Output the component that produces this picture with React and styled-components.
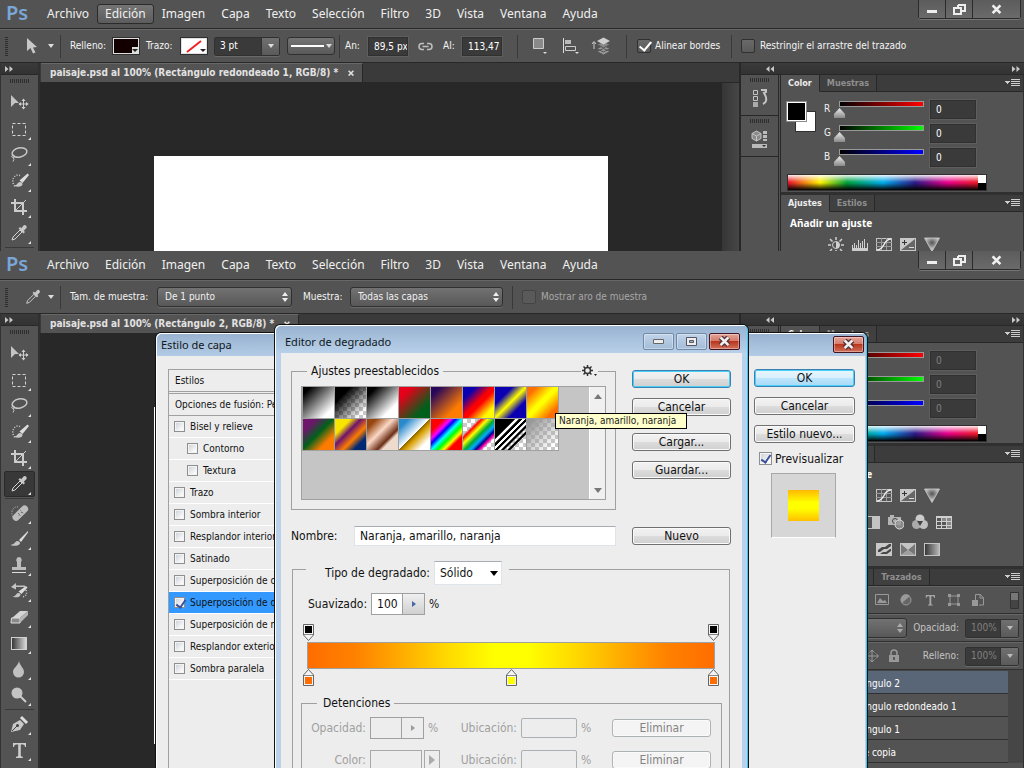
import React, { useState } from 'react';
import styled, { createGlobalStyle, css } from 'styled-components';

const GlobalStyle = createGlobalStyle`
  * {
    box-sizing: border-box;
  }

  body {
    margin: 0;
    background: #282828;
    color: #f0f0f0;
    font-family: 'DejaVu Sans Condensed', 'DejaVu Sans', sans-serif;
    font-size: 10px;
    line-height: 14px;
  }

  button, input, select {
    margin: 0;
    padding: 0;
    border: 0;
    border-radius: 0;
    background: none;
    color: inherit;
    font: inherit;
  }

  svg {
    display: block;
    flex: none;
  }
`;

const Screen = styled.div`
  height: 100vh;
  min-width: 1024px;
  display: flex;
  flex-direction: column;
  overflow: hidden;
`;

const AppWindow = styled.section`
  position: relative;
  display: flex;
  flex-direction: column;
  overflow: hidden;
  flex: ${props => (props.$grow ? '1 1 0' : '0 0 251px')};
  min-height: 0;
`;

/* menu bar */

const MenuBar = styled.header`
  height: 29px;
  flex: none;
  display: flex;
  align-items: flex-start;
  background: #535353;
  border-bottom: 1px solid #282828;
  font-family: 'Noto Sans', sans-serif;
  font-size: 12px;
`;

const Logo = styled.span`
  width: 39px;
  padding-left: 6px;
  flex: none;
  color: #7aa6d8;
  font-weight: 600;
  font-size: 20px;
  line-height: 26px;
`;

const Menu = styled.nav`
  display: flex;
  padding-top: 4px;
`;

const MenuItem = styled.button`
  height: 20px;
  padding: 0 7px;
  border: 1px solid ${props => (props.$open ? '#2b2b2b' : 'transparent')};
  border-radius: 3px;
  background: ${props => (props.$open ? 'linear-gradient(#747474, #5c5c5c)' : 'none')};
  line-height: 18px;
`;

const WindowButtons = styled.div`
  display: flex;
  margin: 0 3px 0 auto;
  border: 1px solid #2b2b2b;
  border-top: 0;
  border-radius: 0 0 3px 3px;
  box-shadow: 0 1px 0 #757575;
`;

const WindowButton = styled.button`
  width: ${props => (props.$wide ? '47px' : '27px')};
  height: 18px;
  display: flex;
  align-items: center;
  justify-content: center;
  background: linear-gradient(#5c5c5c, #6a6a6a);
  border-right: 1px solid #2b2b2b;

  &:last-child {
    border-right: 0;
  }
`;

/* options bar */

const OptionsBar = styled.div`
  height: 34px;
  flex: none;
  display: flex;
  align-items: center;
  padding-left: 5px;
  background: #535353;
  border-top: 1px solid #686868;
  border-bottom: 1px solid #282828;
  white-space: nowrap;
`;

const BarGrip = styled.div`
  width: 3px;
  height: 19px;
  margin-right: 16px;
  background: repeating-linear-gradient(#2e2e2e 0 1px, transparent 1px 2px);
`;

const ToolPreview = styled.div`
  width: 30px;
  display: flex;
  align-items: center;
  justify-content: space-between;
`;

const Divider = styled.div`
  width: 1px;
  height: 23px;
  margin: 0 ${props => props.$after ?? 9}px 0 ${props => props.$before ?? 6}px;
  background: #393939;
`;

const OptionLabel = styled.label`
  flex: none;
  width: ${props => props.$width}px;
  color: ${props => (props.$dim ? '#a8a8a8' : '#f4f4f4')};
`;

const ColorButton = styled.button`
  position: relative;
  width: 28px;
  height: 18px;
  margin-right: 6px;
  border: 1px solid #303030;
  background: ${props => props.$color};
  box-shadow: inset 0 0 0 1px #e0e0e0;
  overflow: hidden;

  svg {
    position: absolute;
    inset: 0;
  }
`;

const FieldGroup = styled.div`
  display: flex;
  height: ${props => props.$height || 19}px;
  border: 1px solid #303030;
  border-radius: 2px;
  box-shadow: 0 1px 0 #6a6a6a;
`;

const DarkInput = styled.input`
  width: ${props => props.$width}px;
  height: ${props => (props.$boxed ? '19px' : 'auto')};
  padding-left: 5px;
  background: #3a3a3a;
  color: ${props => (props.$dim ? '#808080' : '#fff')};
  ${props => props.$boxed && css`
    border: 1px solid #303030;
    box-shadow: 0 0 0 1px #5e5e5e;
  `}
`;

const DropButton = styled.button`
  width: 18px;
  display: flex;
  align-items: center;
  justify-content: center;
  background: linear-gradient(#707070, #5a5a5a);
  border-left: 1px solid #303030;
`;

const StrokeButton = styled.button`
  width: 48px;
  height: 18px;
  margin-left: 7px;
  display: flex;
  align-items: center;
  justify-content: center;
  gap: 2px;
  border: 1px solid #303030;
  border-radius: 3px;
  background: linear-gradient(#747474, #5a5a5a);
`;

const StrokeLine = styled.span`
  width: 33px;
  height: 2px;
  background: #fff;
`;

const LinkSlot = styled.div`
  width: 35px;
  display: flex;
  justify-content: center;
`;

const SelectWrap = styled.div`
  position: relative;
  width: ${props => props.$width}px;
  margin-right: ${props => props.$after || 0}px;

  svg {
    position: absolute;
    right: 4px;
    top: 50%;
    margin-top: -5px;
    pointer-events: none;
  }
`;

const DarkSelect = styled.select`
  appearance: none;
  width: 100%;
  height: 20px;
  padding: 0 14px 0 7px;
  border: 1px solid #303030;
  border-radius: 3px;
  background: linear-gradient(#727272, #585858);
  box-shadow: 0 1px 0 #6a6a6a;
`;

const DarkCheck = styled.input`
  appearance: none;
  position: relative;
  width: 14px;
  height: 14px;
  margin-right: ${props => props.$after || 5}px;
  border: 1px solid #303030;
  border-radius: 2px;
  background: linear-gradient(#6a6a6a, #5a5a5a);

  &:disabled {
    background: #5a5a5a;
    border-color: #444;
  }

  &:checked::after {
    content: '';
    position: absolute;
    left: 4px;
    top: -1px;
    width: 5px;
    height: 10px;
    border: solid #fff;
    border-width: 0 2px 2px 0;
    transform: rotate(40deg);
  }
`;

const IconButton = styled.button`
  width: 29px;
  display: flex;
  align-items: center;
`;

/* work area */

const WorkArea = styled.div`
  flex: 1;
  min-height: 0;
  display: flex;
`;

const ToolColumn = styled.aside`
  width: 40px;
  flex: none;
  display: flex;
  flex-direction: column;
  background: #535353;
  border-left: 1px solid #333;
  border-right: 2px solid #303030;
  overflow: hidden;
`;

const DockHeader = styled.div`
  height: 12px;
  flex: none;
  display: flex;
  align-items: center;
  justify-content: space-between;
  padding: 0 4px;
  background: linear-gradient(#3a3a3a, #333);
  border-bottom: 1px solid #282828;
`;

const Spacer = styled.span`
  width: 21px;
  flex: ${props => (props.$grow ? 1 : 'none')};
`;

const Grip = styled.div`
  width: 19px;
  height: 4px;
  margin: ${props => props.$top || 4}px auto 0;
  flex: none;
  background: repeating-linear-gradient(90deg, #2e2e2e 0 1px, transparent 1px 2px);
`;

const ToolList = styled.div`
  padding: 7px 3px 0;
  display: flex;
  flex-direction: column;
`;

const Tool = styled.button`
  position: relative;
  height: 26px;
  flex: none;
  display: flex;
  align-items: center;
  justify-content: center;
  padding-right: 2px;
  border: 1px solid ${props => (props.$active ? '#2a2a2a' : 'transparent')};
  border-radius: 2px;
  background: ${props => (props.$active ? '#383838' : 'none')};

  ${props => props.$more && css`
    &::after {
      content: '';
      position: absolute;
      right: 3px;
      bottom: 1px;
      border-left: 3px solid transparent;
      border-bottom: 3px solid #e0e0e0;
    }
  `}
`;

const ToolRule = styled.div`
  height: 1px;
  flex: none;
  margin: 1px 1px;
  background: #393939;
`;

const Document = styled.main`
  flex: 1;
  min-width: 0;
  display: flex;
  flex-direction: column;
  background: #282828;
`;

const TabBar = styled.div`
  height: 20px;
  flex: none;
  display: flex;
  background: #3a3a3a;
  border-bottom: 1px solid #282828;
`;

const DocumentTab = styled.div`
  display: flex;
  align-items: center;
  gap: 9px;
  padding: 0 7px 0 9px;
  margin-left: 1px;
  background: #535353;
  border-top: 1px solid #686868;
  border-right: 1px solid #282828;
  color: #e2e2e2;
  font-weight: 700;
  white-space: nowrap;
`;

const CanvasArea = styled.div`
  flex: 1;
  min-height: 0;
  display: flex;
  justify-content: space-between;
`;

const Artboard = styled.div`
  width: ${props => props.$width}px;
  margin: 73px 0 0 114px;
  background: #fff;
  ${props => props.$inset && css`
    margin-bottom: 24px;
  `}
`;

const ScrollTrack = styled.div`
  width: 17px;
  background: linear-gradient(90deg, #363636, #464646);
`;

const Dock = styled.aside`
  width: 285px;
  flex: none;
  display: flex;
  flex-direction: column;
  border-left: 2px solid #282828;
  background: #535353;
`;

const DockBody = styled.div`
  flex: 1;
  min-height: 0;
  display: flex;
`;

const IconColumn = styled.div`
  width: 38px;
  flex: none;
  border-right: 1px solid #282828;
`;

const IconPanel = styled.div`
  height: 41px;
  display: flex;
  flex-direction: column;
  align-items: center;
  border-bottom: 1px solid #282828;

  svg {
    margin-top: 7px;
  }
`;

const Panels = styled.div`
  flex: 1;
  min-width: 0;
  border-left: 1px solid #282828;
  border-right: 1px solid #303030;
  margin-left: 1px;
`;

const Panel = styled.section`
  border-bottom: 3px solid #303030;
`;

const PanelTabs = styled.div`
  height: 17px;
  display: flex;
  align-items: stretch;
  background: #3c3c3c;
`;

const PanelTab = styled.button`
  padding: 0 7px;
  border-right: 1px solid #282828;
  border-bottom: 1px solid ${props => (props.$active ? 'transparent' : '#282828')};
  background: ${props => (props.$active ? '#535353' : '#404040')};
  color: ${props => (props.$active ? '#ededed' : '#8f8f8f')};
  font-size: 9px;
  font-weight: 700;
`;

const PanelMenu = styled.button`
  flex: 1;
  display: flex;
  justify-content: flex-end;
  align-items: center;
  padding-right: 3px;
  border-bottom: 1px solid #282828;
`;

const ColorBody = styled.div`
  height: 100px;
  padding: 8px 0 0 6px;
  display: grid;
  grid-template-columns: 37px auto;
  grid-template-rows: 74px 17px;
`;

const Swatches = styled.div`
  position: relative;
`;

const Swatch = styled.button`
  position: absolute;
  left: ${props => (props.$back ? 9 : 0)}px;
  top: ${props => (props.$back ? 12 : 2)}px;
  width: 19px;
  height: 19px;
  border: 1px solid #fff;
  background: ${props => props.$color};
  box-shadow: 0 0 0 1px ${props => (props.$back ? '#303030' : '#8a8a8a')};
`;

const Channel = styled.div`
  height: 24px;
  display: grid;
  grid-template-columns: 10px 96px 46px;
  align-items: start;
`;

const ChannelName = styled.span`
  padding-top: 2px;
`;

const ChannelSlider = styled.input`
  appearance: none;
  width: 95px;
  height: 18px;
  background:
    linear-gradient(90deg, #000, ${props => props.$color}) 6px 2px / 83px 4px no-repeat,
    linear-gradient(#999, #999) 5px 1px / 85px 6px no-repeat;

  &::-webkit-slider-thumb {
    appearance: none;
    width: 11px;
    height: 10px;
    margin-top: 8px;
    background: linear-gradient(#eee, #888);
    clip-path: polygon(50% 0, 100% 60%, 100% 100%, 0 100%, 0 60%);
  }
`;

const Spectrum = styled.div`
  grid-column: 1 / -1;
  width: 200px;
  height: 17px;
  border: 1px solid #303030;
  display: grid;
  grid-template-columns: 1fr 8px;
  grid-template-rows: 1fr 1fr;
`;

const SpectrumHue = styled.div`
  grid-row: 1 / 3;
  background:
    linear-gradient(rgba(255, 255, 255, 0.9), rgba(255, 255, 255, 0) 48%, rgba(0, 0, 0, 0) 52%, #000),
    linear-gradient(90deg, #e8112d, #fff200 17%, #00a13a 31%, #00adef 50%, #2e1a87 67%, #ec008c 84%, #ed1c24);
`;

const SpectrumEnd = styled.div`
  background: ${props => props.$color};
`;

const AdjustBody = styled.div`
  height: 103px;
  padding: 4px 0 0 9px;
`;

const AdjustTitle = styled.h2`
  margin: 0 0 6px;
  color: #fff;
  font-family: 'Noto Sans', sans-serif;
  font-size: 10px;
  line-height: 14px;
  font-weight: 700;
`;

const AdjustRow = styled.div`
  height: 27px;
  display: flex;
  gap: 8px;
  padding-left: ${props => (props.$wide ? 26 : 38)}px;
`;

const LayerTools = styled.div`
  height: 28px;
  display: flex;
  align-items: center;
  justify-content: flex-end;
  gap: ${props => props.$gap || 6}px;
  padding-right: 4px;
  border-top: 1px solid #666;
  border-bottom: 1px solid #303030;
  color: #c4c4c4;
`;

const LayerRow = styled.div`
  height: 23px;
  margin-right: 15px;
  padding-left: 60px;
  background: ${props => (props.$active ? '#596678' : '#535353')};
  border-bottom: 1px solid #303030;
  color: #fff;
  line-height: 26px;
`;

const LayerList = styled.div`
  padding-top: 1px;
  background: #464646;
`;

/* dialogs */

const Dialog = styled.div`
  position: absolute;
  left: ${props => props.$left}px;
  top: ${props => props.$top}px;
  bottom: 0;
  width: ${props => props.$width}px;
  display: flex;
  flex-direction: column;
  overflow: hidden;
  border: 1px solid #111;
  border-bottom: 0;
  border-radius: 6px 6px 0 0;
  background: linear-gradient(#98b2d0, #b9d1ea 29px);
  box-shadow: inset 1px 1px 0 #fff, inset -1px 0 0 #38c8f0;
  color: #111;
  font-size: 12px;
`;

const TitleBar = styled.div`
  height: ${props => props.$height}px;
  flex: none;
  display: flex;
  align-items: center;
  padding: ${props => props.$drop}px ${props => props.$side}px 0 ${props => props.$start}px;
  gap: 2px;
  font-family: 'Noto Sans', sans-serif;
  font-size: 11px;
  color: #101820;
`;

const TitleText = styled.span`
  margin-right: auto;
`;

const CaptionButton = styled.button`
  width: 31px;
  height: 17px;
  display: flex;
  align-items: center;
  justify-content: center;
  border: 1px solid ${props => (props.$close ? '#431422' : '#7189a4')};
  border-radius: 2px;
  background: ${props => (props.$close
    ? 'linear-gradient(#e3a598, #d4796a 48%, #b8361d 50%, #d2705a)'
    : 'linear-gradient(#c0d3e9, #a4bdd8)')};
  box-shadow: inset 0 0 0 1px rgba(255, 255, 255, 0.35);
`;

const EditorBody = styled.div`
  flex: 1;
  min-height: 0;
  margin: 0 6px;
  padding: 10px 11px 0 10px;
  background: #ededed;
  overflow: hidden;
`;

const EditorTop = styled.div`
  display: flex;
  justify-content: space-between;
`;

const PresetColumn = styled.div`
  width: 325px;
`;

const ButtonColumn = styled.div`
  width: 99px;
  display: flex;
  flex-direction: column;
  gap: 10px;
  padding-top: 7px;
`;

const PushButton = styled.button`
  height: 18px;
  width: 100%;
  border: 1px solid ${props => (props.$primary ? '#3c7fb1' : '#707070')};
  border-radius: 3px;
  background: ${props => (props.$glow
    ? 'linear-gradient(#e8f6fd, #d9f0fc 48%, #bee6fd 50%, #a7d9f5)'
    : 'linear-gradient(#f2f2f2, #ebebeb 48%, #dddddd 50%, #cfcfcf)')};
  box-shadow: inset 0 0 0 1px ${props => (props.$primary ? '#48d0f8' : '#fafafa')};
  line-height: 16px;

  &:disabled {
    border-color: #adb2b5;
    background: #f4f4f4;
    color: #838383;
  }
`;

const ButtonGap = styled.div`
  height: ${props => props.$size}px;
  margin-bottom: -10px;
`;

const GroupBox = styled.fieldset`
  position: relative;
  min-width: 0;
  margin: ${props => props.$margin || '0'};
  padding: ${props => props.$padding};
  border: 1px solid #a0a0a0;
`;

const Legend = styled.legend`
  display: flex;
  align-items: center;
  gap: 4px;
  margin-left: ${props => props.$offset || 0}px;
  padding: ${props => props.$padding || '0 4px'};
  line-height: 16px;
`;

const GearButton = styled.button`
  position: absolute;
  right: 17px;
  top: -14px;
  padding: 0 1px;
  display: flex;
  align-items: flex-end;
  gap: 1px;
  background: #ededed;
`;

const PresetBox = styled.div`
  height: 114px;
  display: flex;
  justify-content: space-between;
  border: 1px solid #a0a0a0;
  background: #c5c5c5;
`;

const PresetGrid = styled.div`
  display: grid;
  grid-template-columns: repeat(8, 31px);
  grid-auto-rows: 31px;
  gap: 1px;
  align-self: flex-start;
  padding: 0 1px 1px;
  background: #a0a0a0;
`;

const checker = 'repeating-conic-gradient(#c8c8c8 0 25%, #fff 0 50%) 0 0 / 8px 8px';

const Preset = styled.button`
  background: linear-gradient(135deg, ${props => props.$stops}), ${checker};
`;

const PresetScroll = styled.div`
  width: 16px;
  display: flex;
  flex-direction: column;
  justify-content: space-between;
  align-items: center;
  padding: 7px 0 6px;
  background: #f0f0f0;
  border-left: 1px solid #fff;
`;

const Tooltip = styled.div`
  position: absolute;
  left: 555px;
  top: 162px;
  height: 16px;
  width: 132px;
  padding-left: 3px;
  border: 1px solid #000;
  background: #ffffcc;
  color: #222;
`;

const NameRow = styled.div`
  display: flex;
  justify-content: space-between;
  align-items: center;
  margin: 16px 0 7px;
  height: 20px;
`;

const NameLabel = styled.label`
  width: 63px;
`;

const NameInput = styled.input`
  width: 262px;
  height: 20px;
  padding-left: 5px;
  margin-right: auto;
  border: 1px solid #dfe3ea;
  border-top-color: #a8acb4;
  background: #fff;
`;

const ButtonSlot = styled.div`
  width: 99px;
`;

const LightSelect = styled.select`
  appearance: none;
  width: 100%;
  height: 24px;
  padding-left: 5px;
  border: 1px solid #dfe3ea;
  border-top-color: #a8acb4;
  background: #fff;
`;

const FieldRow = styled.div`
  display: flex;
  align-items: center;
  gap: 4px;
  padding-left: 7px;
`;

const Stepper = styled.div`
  height: 22px;
  width: 54px;
  display: flex;
  border: 1px solid #a0a0a0;
`;

const StepInput = styled.input`
  width: 31px;
  padding-left: 5px;
  border-right: 1px solid #a0a0a0;
  background: ${props => (props.disabled ? '#ededed' : '#fff')};
`;

const StepButton = styled.button`
  flex: 1;
  display: flex;
  align-items: center;
  justify-content: center;
  background: ${props => (props.disabled ? 'none' : 'linear-gradient(#f0f0f0, #d0d0d0)')};
`;

const Track = styled.div`
  margin: 9px 3px 8px 2px;
`;

const StopRow = styled.div`
  display: flex;
  justify-content: space-between;
  height: 18px;
`;

const Stop = styled.button`
  display: block;
  width: 11px;
  height: 17px;
`;

const GradientBar = styled.div`
  height: 27px;
  margin: 0 4px;
  border: 1px solid #a0a0a0;
  background: linear-gradient(90deg, #ff6d00, #ff8200 12%, #ffac00 23%, #ffd800 34%, #ffff00 46%, #ffff00 54%, #ffd800 66%, #ffac00 77%, #ff8200 88%, #ff6d00);
`;

const StopFields = styled.div`
  display: grid;
  grid-template-columns: 64px 54px 12px 73px 56px 27px 99px;
  grid-auto-rows: 22px;
  gap: 10px 4px;
  align-items: center;
  color: #a0a0a0;
`;

const StopLabel = styled.label`
  text-align: right;
`;

const LocationInput = styled.input`
  height: 20px;
  width: 56px;
  border: 1px solid #a8b0b4;
  border-radius: 2px;
  background: #ededed;
`;

const ColorWell = styled.div`
  grid-column: span 2;
  display: flex;
  gap: 2px;
`;

const WellButton = styled.button`
  width: ${props => props.$width}px;
  height: 20px;
  display: flex;
  align-items: center;
  justify-content: center;
  border: 1px solid #a8a8a8;
`;

const StyleBody = styled.div`
  flex: 1;
  min-height: 0;
  display: flex;
  justify-content: space-between;
  margin: 0 2px 0 1px;
  padding: 13px 10px 0 11px;
  background: #ededed;
`;

const StyleList = styled.div`
  width: 107px;
  overflow: hidden;
  border: 1px solid #a0a0a0;
  border-bottom: 0;
  font-size: 10px;
`;

const StyleHeading = styled.div`
  height: ${props => (props.$double ? 24 : 22)}px;
  padding-left: 6px;
  border-bottom: ${props => (props.$double ? '3px double' : '1px solid')} #a0a0a0;
  line-height: 22px;
  white-space: nowrap;
`;

const StyleItem = styled.label`
  height: 22px;
  display: flex;
  align-items: center;
  gap: 5px;
  padding-left: ${props => (props.$indent ? 18 : 5)}px;
  border-bottom: 1px solid #fff;
  background: ${props => (props.$active ? '#3399ff' : 'none')};
  white-space: nowrap;
`;

const LightCheck = styled.input`
  appearance: none;
  flex: none;
  position: relative;
  width: ${props => props.$size || 11}px;
  height: ${props => props.$size || 11}px;
  border: 1px solid #8e8f8f;
  background: linear-gradient(135deg, #c9cfd6, #fbfbfb 80%);
  box-shadow: inset 0 0 0 1px #f4f4f4;

  &:checked::after {
    content: '';
    position: absolute;
    left: 3px;
    top: 0;
    width: 4px;
    height: 8px;
    border: solid #3b4f9a;
    border-width: 0 2px 2px 0;
    transform: rotate(35deg);
  }
`;

const StyleButtons = styled.div`
  width: 101px;
  display: flex;
  flex-direction: column;
  gap: 10px;
`;

const PreviewLabel = styled.label`
  display: flex;
  align-items: center;
  gap: 3px;
  height: 13px;
  margin: -1px 0 -2px 5px;
`;

const PreviewFrame = styled.div`
  width: 65px;
  height: 65px;
  margin-left: 17px;
  display: flex;
  align-items: center;
  justify-content: center;
  border: 1px solid #a8a8a8;
  border-bottom-color: #fff;
  background: #d6d6d6;
`;

const PreviewColor = styled.div`
  width: 31px;
  height: 31px;
  background: linear-gradient(#ffb800, #ffff00 40%, #ffff00 60%, #ffc000);
`;

/* icons */

const Caret = ({ color = '#ddd' }) => (
  <svg width="6" height="4" viewBox="0 0 6 4"><path d="M0 0h6L3 4z" fill={color} /></svg>
);

const UpDown = ({ color = '#eee' }) => (
  <svg width="6" height="10" viewBox="0 0 6 10"><path d="M0 4l3-4 3 4zM0 6h6l-3 4z" fill={color} /></svg>
);

const Chevrons = ({ left }) => (
  <svg width="8" height="6" viewBox="0 0 8 6">
    <path d={left ? 'M3.500 0v6L0 3zM8 0v6L4.500 3z' : 'M0 0v6l3.500-3zM4.500 0v6L8 3z'} fill="#c8c8c8" />
  </svg>
);

const PanelMenuIcon = () => (
  <svg width="15" height="8" viewBox="0 0 15 8" shapeRendering="crispEdges">
    <path d="M0 2h5L2.500 5z" fill="#ccc" />
    <path d="M6 .5h9M6 2.500h9M6 4.500h9M6 6.500h9" stroke="#ccc" />
  </svg>
);

const CloseGlyph = ({ size = 10, color = '#f0f0f0', edge }) => (
  <svg width={size} height={size * 0.8} viewBox="0 0 10 8">
    <path d="M2 1l6 6M8 1L2 7" stroke={edge || 'none'} strokeWidth="4" />
    <path d="M2 1l6 6M8 1L2 7" stroke={color} strokeWidth="2" />
  </svg>
);

const StepArrow = ({ color }) => (
  <svg width="4" height="6" viewBox="0 0 4 6"><path d="M0 0l4 3-4 3z" fill={color} /></svg>
);

const LinkIcon = () => (
  <svg width="15" height="9" viewBox="0 0 15 9">
    <path d="M6 1.500H4a3 3 0 0 0 0 6h2M9 1.500h2a3 3 0 0 1 0 6H9M4.500 4.500h6" fill="none" stroke="#c0c0c0" strokeWidth="1.500" />
  </svg>
);

const eyedropper = (
  <>
    <path d="M3 17l1-3 7-7 2 2-7 7z" fill="none" stroke="#d4d4d4" />
    <path d="M9.500 5.500l5 5 1.500-1.500-1.200-1.200L17.500 5a2 2 0 0 0-2.700-2.700l-2.600 2.900L11 4z" fill="#c8c8c8" />
  </>
);

const toolIcons = {
  move: (
    <>
      <path d="M2 2v12l4-4h4z" fill="#c4c4c4" />
      <path d="M14.500 6.500v9M10 11h9" stroke="#d0d0d0" />
      <path d="M12.500 8l2-2.500 2 2.500zM12.500 14l2 2.500 2-2.500zM12 9l-2.500 2 2.500 2zM17 9l2.500 2-2.500 2z" fill="#d0d0d0" />
    </>
  ),
  marquee: <path d="M3.500 4.500h13v12h-13z" fill="none" stroke="#d4d4d4" strokeDasharray="3 2" />,
  lasso: (
    <>
      <ellipse cx="10.500" cy="7.500" rx="7.500" ry="4.500" transform="rotate(-12 10.500 7.500)" fill="none" stroke="#c8c8c8" strokeWidth="1.500" />
      <path d="M4 10c-2 1-1.500 3 .5 2.500S6 10 4 10M4.500 12.500q1 2-.5 4" fill="none" stroke="#c8c8c8" />
    </>
  ),
  quick: (
    <>
      <path d="M11 4.500a5 6 0 1 0-4 11.500" fill="none" stroke="#ccc" strokeWidth="1.500" strokeDasharray="1 1.500" />
      <path d="M18.500 2.500L20 4l-6.500 8-3-2.500z" fill="#ddd" />
      <path d="M4.500 14.500q3 0 4.500-2.500c1.500-2 5-.5 4.500 1.500-1 2.500-5 3-9 1z" fill="#c8c8c8" />
    </>
  ),
  crop: (
    <>
      <path d="M6 2v12h12M2 6h12v12" fill="none" stroke="#ccc" strokeWidth="2" />
      <path d="M7 13l10-10" stroke="#ccc" />
    </>
  ),
  eyedropper,
  heal: (
    <>
      <path d="M9 4a5 6 0 0 0-6 7 5 4 0 0 0 1 3" fill="none" stroke="#ccc" strokeDasharray="1 1.500" />
      <rect x="2" y="7" width="19" height="7" rx="3.500" transform="rotate(-45 11 10.500)" fill="#bdbdbd" />
      <path d="M9 10l3 3M12 9l1 1M10 12v.5M11.500 7.500l3 3" stroke="#4a4a4a" strokeDasharray="1 1" />
    </>
  ),
  brush: (
    <>
      <path d="M19 2l-9 9 2 2 7-9.500z" fill="#ddd" />
      <path d="M1.500 16q3 0 5-3c1.500-2 5-.5 4.500 1.500-1 2.500-6 3-9.500 1.500z" fill="#c4c4c4" />
    </>
  ),
  stamp: (
    <>
      <path d="M10 2a3 3 0 0 1 2 5v5h5v3H3v-3h5V7a3 3 0 0 1 2-5z" fill="#bdbdbd" />
      <path d="M3 17.500h14" stroke="#ddd" />
    </>
  ),
  history: (
    <>
      <path d="M2 6l5-4v2.500h9V6H7v2.500z" fill="#c4c4c4" />
      <path d="M17 5l1.500 1.500-6 6.500-3-2.500z" fill="#ddd" />
      <path d="M3.500 15.500q2.500 0 4-2.500c1.500-2 4.500-.5 4 1-1 2.500-4 3-8 1.500z" fill="#c4c4c4" />
      <path d="M17 9q2 6-4 7" fill="none" stroke="#ccc" strokeWidth="1.500" strokeDasharray="1 1.500" />
    </>
  ),
  eraser: (
    <>
      <path d="M3 11L11 4h8l-8 7z" fill="#d4d4d4" />
      <path d="M2.500 11h8.500v5H2z" fill="#8a8a8a" stroke="#ddd" />
      <path d="M11 11l8-7v4l-8 8z" fill="#b4b4b4" />
    </>
  ),
  gradient: (
    <>
      <defs>
        <linearGradient id="toolGradient"><stop stopColor="#333" /><stop offset="1" stopColor="#ddd" /></linearGradient>
      </defs>
      <rect x="2.500" y="4.500" width="15" height="12" fill="url(#toolGradient)" stroke="#d0d0d0" />
    </>
  ),
  blur: <path d="M10 2c1 5 5 7 5 11a5 5 0 0 1-11 0c0-4 5-6 6-11z" fill="#c0c0c0" />,
  dodge: (
    <>
      <circle cx="8" cy="8" r="5.500" fill="#c4c4c4" />
      <path d="M11 11l6 6" stroke="#ccc" strokeWidth="2" />
    </>
  ),
  pen: (
    <>
      <path d="M2 18l2-8 7-4 4 4-4 6z" fill="#c8c8c8" />
      <path d="M3 17l5-5" stroke="#444" />
      <circle cx="8.500" cy="11.500" r="1.500" fill="#444" />
      <path d="M12 3l6 6" stroke="#ddd" strokeWidth="3" />
    </>
  ),
  type: <path d="M4 3h13v4h-1q0-2.500-2-2.500h-2.200v11q0 1.200 2 1.200V18H7v-1.300q2.200 0 2.200-1.200v-11H7Q5 4.500 5 7H4z" fill="#ccc" />,
};

const ToolIcon = ({ name }) => (
  <svg width="20" height="20" viewBox="0 0 20 20">{toolIcons[name]}</svg>
);

const boxed = <rect x=".5" y="2.500" width="15" height="12" fill="#555" stroke="#c4c4c4" />;

const adjustIcons = {
  brightness: (
    <>
      <circle cx="8" cy="9" r="3.500" fill="none" stroke="#d0d0d0" />
      <path d="M8 5.500a3.500 3.500 0 0 1 0 7z" fill="#d0d0d0" />
      <path d="M8 1v3M8 14v2M0 9h3M13 9h3M2 3l2.500 2.500M14 3l-2.500 2.500M2 15l2-2M14 15l-2-2" stroke="#d0d0d0" strokeWidth="1.500" />
    </>
  ),
  levels: (
    <>
      <path d="M0 12h16v3H0z" fill="#ccc" />
      <path d="M.5 14V9M2.500 14V7M4.500 14V9M6.500 14V4M8.500 14V7M10.500 14V5M12.500 14V3M15.500 14V7" stroke="#d0d0d0" />
    </>
  ),
  curves: (
    <>
      {boxed}
      <path d="M5.500 2v12M10.500 2v12M0 6.500h16M0 10.500h16" stroke="#999" />
      <path d="M1 14c8 0 6-11 14-11" fill="none" stroke="#eee" strokeWidth="1.500" />
    </>
  ),
  exposure: (
    <>
      <path d="M0 2h16v13H0z" fill="#c8c8c8" />
      <path d="M15 3v11H1z" fill="#666" />
      <path d="M2 6.500h5M4.500 4v5" stroke="#333" />
      <path d="M9 11.500h5" stroke="#ddd" />
    </>
  ),
  vibrance: (
    <>
      <defs>
        <radialGradient id="vib" cy=".35"><stop stopColor="#555" /><stop offset="1" stopColor="#ccc" /></radialGradient>
      </defs>
      <path d="M.5 2h15L8 15.500z" fill="url(#vib)" stroke="#bbb" />
    </>
  ),
  hue: <path d="M0 2h16v4H0zM0 8h16v7H0z" fill="#bbb" />,
  balance: <path d="M1 14h14M8 2v12M2 4h12M0 10h5L2.500 5zM11 10h5l-2.500-5z" fill="#bbb" stroke="#bbb" />,
  bw: (
    <>
      {boxed}
      <path d="M8 2h8v13H8z" fill="#c4c4c4" />
    </>
  ),
  photo: (
    <>
      <path d="M0 3h2V1h4v2h7v8H0z" fill="#b4b4b4" />
      <circle cx="7" cy="7" r="2.500" fill="none" stroke="#444" />
      <circle cx="11.500" cy="10.500" r="4.500" fill="#999" fillOpacity=".8" stroke="#ddd" />
    </>
  ),
  mixer: (
    <>
      <circle cx="8" cy="5" r="4.500" fill="#ccc" />
      <circle cx="4.500" cy="10.500" r="4.500" fill="#aaa" />
      <circle cx="11.500" cy="10.500" r="4.500" fill="#c0c0c0" />
      <path d="M5 7h6l-3 5z" fill="#444" />
    </>
  ),
  lookup: (
    <>
      <path d="M0 2h16v13H0z" fill="#d0d0d0" />
      <path d="M1 4h4v3H1zM1 8h4v3H1zM6 8h4v3H6zM6 12h4v2H6zM1 12h4v2H1z" fill="#555" />
      <path d="M6 4h4v3H6zM11 4h4v3h-4zM11 8h4v3h-4zM11 12h4v2h-4z" fill="#888" />
    </>
  ),
  invert: (
    <>
      {boxed}
      <circle cx="8" cy="8" r="3.500" fill="#ccc" />
    </>
  ),
  posterize: (
    <>
      {boxed}
      <path d="M1 11h5V7h5V3h4v11H1z" fill="#999" />
    </>
  ),
  threshold: (
    <>
      <path d="M0 2h16v13H0z" fill="#c8c8c8" />
      <path d="M2 9l4-3h3l4-3h2v2l-4 3H8l-4 3H2zM4 13l3-2h3l4-3h1v2l-4 3z" fill="#484848" />
    </>
  ),
  selective: (
    <>
      <path d="M0 2h16v13H0z" fill="#c4c4c4" />
      <path d="M1 3l7 6-7 5z" fill="#777" />
      <path d="M15 3L8 9l7 5z" fill="#777" />
      <path d="M1 14l7-5 7 5z" fill="#a0a0a0" />
    </>
  ),
  map: (
    <>
      <defs>
        <linearGradient id="mapGradient"><stop stopColor="#333" /><stop offset="1" stopColor="#bbb" /></linearGradient>
      </defs>
      <rect x=".5" y="2.500" width="15" height="12" fill="url(#mapGradient)" stroke="#c4c4c4" />
    </>
  ),
};

const SmallIcon = ({ children, size = 16 }) => (
  <svg width={size} height={size} viewBox="0 0 16 16">{children}</svg>
);

const StopMarker = ({ color, flip }) => (
  <svg width="11" height="17" viewBox="0 0 11 17">
    <g transform={flip ? 'rotate(180 5.500 8.500)' : undefined}>
      <path d="M.5.5h10v10.500l-5 5.500-5-5.500z" fill="#f4f4f4" stroke="#666" />
      <path d="M1 10.500h9" stroke="#888" />
      <path d="M2 2h7v7H2z" fill={color} />
    </g>
  </svg>
);

/* data */

const menuItems = ['Archivo', 'Edición', 'Imagen', 'Capa', 'Texto', 'Selección', 'Filtro', '3D', 'Vista', 'Ventana', 'Ayuda'];

const toolGroups = [
  ['move', 'marquee', 'lasso', 'quick', 'crop', 'eyedropper'],
  ['heal', 'brush', 'stamp', 'history', 'eraser', 'gradient', 'blur', 'dodge'],
  ['pen', 'type'],
];

const adjustRows = [
  ['brightness', 'levels', 'curves', 'exposure', 'vibrance'],
  ['hue', 'balance', 'bw', 'photo', 'mixer', 'lookup'],
  ['invert', 'posterize', 'threshold', 'selective', 'map'],
];

const channels = [
  { name: 'R', color: '#f00' },
  { name: 'G', color: '#0f0' },
  { name: 'B', color: '#00f' },
];

const presets = [
  { name: 'Frontal a fondo', stops: '#000 12%, #fff 82%' },
  { name: 'Frontal a transparente', stops: '#000 25%, transparent 85%' },
  { name: 'Negro, blanco', stops: '#000 15%, #fff 75%' },
  { name: 'Rojo, verde', stops: '#e60019 20%, #00601b 75%' },
  { name: 'Violeta, naranja', stops: '#29085a 15%, #ff7c00 75%' },
  { name: 'Azul, rojo, amarillo', stops: '#0a00b2 20%, #f00 48%, #f00 55%, #fffc00 82%' },
  { name: 'Azul, amarillo, azul', stops: '#0a00b2 28%, #fffc00 50%, #0a00b2 72%' },
  { name: 'Naranja, amarillo, naranja', stops: '#ff6e02 15%, #ff0 45%, #ff0 52%, #ff6d00 82%' },
  { name: 'Violeta, verde, naranja', stops: '#6f156c 20%, #00601b 48%, #fd7c00 76%' },
  { name: 'Amarillo, violeta, naranja, azul', stops: '#f9e600 25%, #6f156c 42%, #fd7c00 62%, #002874 80%' },
  { name: 'Cobre', stops: '#974610 15%, #fbd8c5 42%, #6c2e16 66%, #efdbcd 74%' },
  { name: 'Cromo', stops: '#2989cc 15%, #fff 49%, #906a00 50%, #d99f00 58%, #fff 82%' },
  { name: 'Espectro', stops: '#f00 20%, #f0f 32%, #00f 40%, #0ff 50%, #0f0 60%, #ff0 70%, #f00 78%' },
  { name: 'Arco iris transparente', stops: 'transparent 25%, #f00 30%, #ff0 40%, #0a3 52%, #0af 62%, #008 70%, #f0a 76%, transparent 82%' },
  { name: 'Rayas transparentes', stops: '#000 32%, #fff 33% 38%, #000 39% 44%, #fff 45% 49%, #000 50% 54%, #fff 55% 59%, #000 60% 64%, transparent 65% 69%, #000 70% 74%, transparent 75%' },
  { name: 'Densidad neutra', stops: '#999 10%, transparent 85%' },
];

const layerStyles = [
  { name: 'Bisel y relieve' },
  { name: 'Contorno', indent: true },
  { name: 'Textura', indent: true },
  { name: 'Trazo' },
  { name: 'Sombra interior' },
  { name: 'Resplandor interior' },
  { name: 'Satinado' },
  { name: 'Superposición de colores' },
  { name: 'Superposición de degradado', checked: true },
  { name: 'Superposición de motivo' },
  { name: 'Resplandor exterior' },
  { name: 'Sombra paralela' },
];

const layers = ['Rectángulo 2', 'Rectángulo redondeado 1', 'Rectángulo 1', 'Monte copia'];

/* parts */

function AppMenu({ open }) {
  return (
    <MenuBar>
      <Logo>Ps</Logo>
      <Menu>
        {menuItems.map(item => (
          <MenuItem key={item} $open={item === open}>{item}</MenuItem>
        ))}
      </Menu>
      <WindowButtons>
        <WindowButton aria-label="Minimizar">
          <svg width="10" height="10" viewBox="0 0 10 10"><path d="M0 6h10v3H0z" fill="#eee" /></svg>
        </WindowButton>
        <WindowButton aria-label="Restaurar">
          <svg width="13" height="11" viewBox="0 0 13 11">
            <path d="M5 1h7v6H9M1 4h7v6H1zM5 1v3" fill="none" stroke="#eee" strokeWidth="2" />
          </svg>
        </WindowButton>
        <WindowButton $wide aria-label="Cerrar"><CloseGlyph size={13} /></WindowButton>
      </WindowButtons>
    </MenuBar>
  );
}

function ShapeOptions() {
  return (
    <OptionsBar>
      <BarGrip />
      <ToolPreview>
        <svg width="16" height="18" viewBox="0 0 16 18">
          <path d="M3 1v13l3.500-3 2.500 5.500 2.500-1L9 10.500l4-.5z" fill="#c8c8c8" />
        </svg>
        <Caret />
      </ToolPreview>
      <Divider />
      <OptionLabel $width={42}>Relleno:</OptionLabel>
      <ColorButton $color="#120000" aria-label="Relleno">
        <svg width="26" height="16" viewBox="0 0 26 16"><path d="M19 9h6v6h-6z" fill="#ddd" /><path d="M19 11h6l-3 3z" fill="#222" /></svg>
      </ColorButton>
      <OptionLabel $width={34}>Trazo:</OptionLabel>
      <ColorButton $color="#fff" aria-label="Trazo">
        <svg width="26" height="16" viewBox="0 0 26 16"><path d="M6 14L20 3" stroke="#e22" strokeWidth="2" /><path d="M19 11h6l-3 3z" fill="#222" /></svg>
      </ColorButton>
      <FieldGroup>
        <DarkInput $width={46} defaultValue="3 pt" aria-label="Grosor de trazo" />
        <DropButton aria-label="Grosores"><Caret /></DropButton>
      </FieldGroup>
      <StrokeButton aria-label="Tipo de trazo"><StrokeLine /><Caret /></StrokeButton>
      <Divider $before={4} $after={5} />
      <OptionLabel $width={23} htmlFor="ancho">An:</OptionLabel>
      <DarkInput id="ancho" $boxed $width={40} defaultValue="89,5 px" />
      <LinkSlot><LinkIcon /></LinkSlot>
      <OptionLabel $width={19} htmlFor="alto">Al:</OptionLabel>
      <DarkInput id="alto" $boxed $width={40} defaultValue="113,47 px" />
      <Divider $before={15} $after={15} />
      <IconButton aria-label="Operaciones de trazado">
        <svg width="16" height="18" viewBox="0 0 16 18">
          <path d="M.5 1.500h10v10H.5z" fill="#8a8a8a" stroke="#ccc" /><path d="M10 15h4l-2 2z" fill="#ddd" />
        </svg>
      </IconButton>
      <IconButton aria-label="Alineación de trazado">
        <svg width="18" height="18" viewBox="0 0 18 18">
          <path d="M1.500 1v15" stroke="#ddd" /><path d="M3 3h6v4H3z" fill="#bbb" />
          <path d="M3.500 9.500h10v4h-10z" fill="none" stroke="#ccc" /><path d="M13 15h4l-2 2z" fill="#ddd" />
        </svg>
      </IconButton>
      <IconButton aria-label="Disposición de trazado">
        <svg width="20" height="19" viewBox="0 0 20 19">
          <path d="M3 12V5M1 7l2-2.500L5 7" fill="none" stroke="#ccc" />
          <path d="M6 11.500l6.500-3 6.500 3-6.500 3.500zM6 14.500l6.500-3 6.500 3-6.500 3.500z" fill="#999" stroke="#555" />
          <path d="M6 7.500l6.500-3 6.500 3-6.500 3.500z" fill="#888" stroke="#555" />
          <path d="M6 4l6.500-3.500L19 4l-6.500 3.500z" fill="#d0d0d0" />
        </svg>
      </IconButton>
      <Divider $before={6} $after={10} />
      <DarkCheck id="alinear" type="checkbox" defaultChecked $after={4} />
      <OptionLabel $width={70} htmlFor="alinear">Alinear bordes</OptionLabel>
      <Divider />
      <DarkCheck id="restringir" type="checkbox" />
      <OptionLabel htmlFor="restringir">Restringir el arrastre del trazado</OptionLabel>
    </OptionsBar>
  );
}

function EyedropperOptions() {
  return (
    <OptionsBar>
      <BarGrip />
      <ToolPreview>
        <svg width="18" height="18" viewBox="0 0 20 20">{eyedropper}</svg>
        <Caret />
      </ToolPreview>
      <Divider />
      <OptionLabel $width={87} htmlFor="tamano">Tam. de muestra:</OptionLabel>
      <SelectWrap $width={135} $after={11}>
        <DarkSelect id="tamano"><option>De 1 punto</option></DarkSelect>
        <UpDown />
      </SelectWrap>
      <OptionLabel $width={47} htmlFor="muestra">Muestra:</OptionLabel>
      <SelectWrap $width={153} $after={3}>
        <DarkSelect id="muestra"><option>Todas las capas</option></DarkSelect>
        <UpDown />
      </SelectWrap>
      <Divider />
      <DarkCheck id="aro" type="checkbox" disabled />
      <OptionLabel htmlFor="aro" $dim>Mostrar aro de muestra</OptionLabel>
    </OptionsBar>
  );
}

function Tools({ active }) {
  return (
    <ToolColumn>
      <DockHeader><Chevrons /></DockHeader>
      <Grip />
      <ToolList>
        {toolGroups.map((group, index) => (
          <React.Fragment key={group[0]}>
            {index > 0 && <ToolRule />}
            {group.map(name => (
              <Tool key={name} aria-label={name} $active={name === active} $more={name !== 'move'}>
                <ToolIcon name={name} />
              </Tool>
            ))}
          </React.Fragment>
        ))}
      </ToolList>
    </ToolColumn>
  );
}

function DocumentView({ title, width, inset }) {
  return (
    <Document>
      <TabBar>
        <DocumentTab>
          {title}
          <CloseGlyph size={8} color="#ddd" />
        </DocumentTab>
      </TabBar>
      <CanvasArea>
        <Artboard $width={width} $inset={inset} />
        <ScrollTrack />
      </CanvasArea>
    </Document>
  );
}

function Tabs({ names }) {
  return (
    <PanelTabs>
      {names.map((name, index) => (
        <PanelTab key={name} $active={index === 0}>{name}</PanelTab>
      ))}
      <PanelMenu aria-label="Menú del panel"><PanelMenuIcon /></PanelMenu>
    </PanelTabs>
  );
}

function ColorPanel({ dim }) {
  return (
    <Panel>
      <Tabs names={['Color', 'Muestras']} />
      <ColorBody>
        <Swatches>
          <Swatch $back $color="#fff" aria-label="Color de fondo" />
          <Swatch $color="#000" aria-label="Color frontal" />
        </Swatches>
        <div>
          {channels.map(channel => (
            <Channel key={channel.name}>
              <ChannelName>{channel.name}</ChannelName>
              <ChannelSlider type="range" min="0" max="255" defaultValue="0" $color={channel.color} aria-label={channel.name} />
              <DarkInput $boxed $width={46} $dim={dim} defaultValue="0" aria-label={`Valor ${channel.name}`} />
            </Channel>
          ))}
        </div>
        <Spectrum>
          <SpectrumHue />
          <SpectrumEnd $color="#fff" />
          <SpectrumEnd $color="#000" />
        </Spectrum>
      </ColorBody>
    </Panel>
  );
}

function AdjustPanel() {
  return (
    <Panel>
      <Tabs names={['Ajustes', 'Estilos']} />
      <AdjustBody>
        <AdjustTitle>Añadir un ajuste</AdjustTitle>
        {adjustRows.map(row => (
          <AdjustRow key={row[0]} $wide={row.length > 5}>
            {row.map(name => <SmallIcon key={name}>{adjustIcons[name]}</SmallIcon>)}
          </AdjustRow>
        ))}
      </AdjustBody>
    </Panel>
  );
}

function PercentField({ label }) {
  return (
    <>
      <label htmlFor={label}>{label}:</label>
      <FieldGroup>
        <DarkInput id={label} $width={34} $dim defaultValue="100%" />
        <DropButton aria-label={`${label} valores`}><Caret color="#bbb" /></DropButton>
      </FieldGroup>
    </>
  );
}

function LayersPanel() {
  return (
    <section>
      <Tabs names={['Capas', 'Canales', 'Trazados']} />
      <LayerTools $gap={10}>
        <svg width="14" height="14" viewBox="0 0 14 14"><path d="M.5 1.500h13v10H.5z" fill="none" stroke="#999" /><path d="M2 10l3-5 3 3 2-1 2 3z" fill="#999" /></svg>
        <svg width="14" height="14" viewBox="0 0 14 14"><circle cx="7" cy="7" r="5" fill="#666" stroke="#999" /><path d="M3 10L11 3A5 5 0 0 0 3 10z" fill="#999" /></svg>
        <svg width="14" height="14" viewBox="0 0 20 20"><g opacity=".7">{toolIcons.type}</g></svg>
        <svg width="14" height="14" viewBox="0 0 14 14"><path d="M3 3h8v8H3z" fill="none" stroke="#999" /><path d="M1 1h3v3H1zM10 1h3v3h-3zM1 10h3v3H1zM10 10h3v3h-3z" fill="#999" /></svg>
        <svg width="14" height="14" viewBox="0 0 14 14"><path d="M4.500 7V1.500h5L12.500 5v7H8M9 1v4h4" fill="none" stroke="#999" /><path d="M1 7h6v6H1z" fill="#999" /></svg>
        <svg width="24" height="17" viewBox="0 0 24 17"><path d="M15.500.5h8v16h-8z" fill="#444" stroke="#333" /><path d="M16 1h7v7h-7z" fill="#777" /></svg>
      </LayerTools>
      <LayerTools>
        <SelectWrap $width={121}>
          <DarkSelect aria-label="Modo de fusión"><option>Normal</option></DarkSelect>
          <UpDown color="#aaa" />
        </SelectWrap>
        <PercentField label="Opacidad" />
      </LayerTools>
      <LayerTools>
        <svg width="56" height="14" viewBox="0 0 56 14">
          <path d="M5 7h12M11 1v12M8.500 3.500L11 1l2.500 2.500M8.500 10.500L11 13l2.500-2.500M7 4.500L4.500 7 7 9.500M15 4.500L17.500 7 15 9.500" fill="none" stroke="#999" />
          <path d="M28 6h10v7H28z" fill="#999" />
          <path d="M30 6V4a3 3 0 0 1 6 0v2" fill="none" stroke="#999" strokeWidth="1.500" />
          <path d="M33 8v3" stroke="#444" strokeWidth="1.500" />
        </svg>
        <PercentField label="Relleno" />
      </LayerTools>
      <LayerList>
        {layers.map((name, index) => (
          <LayerRow key={name} $active={index === 0}>{name}</LayerRow>
        ))}
      </LayerList>
    </section>
  );
}

function RightDock({ dim, showLayers }) {
  return (
    <Dock>
      <DockHeader>
        <Spacer />
        <Chevrons left />
        <Spacer $grow />
        <Chevrons />
      </DockHeader>
      <DockBody>
        <IconColumn>
          <IconPanel>
            <Grip $top={3} />
            <svg width="16" height="18" viewBox="0 0 16 18">
              <path d="M1.500 1.500h4v4h-4zM1.500 7.500h4v4h-4z" fill="none" stroke="#c4c4c4" />
              <path d="M1 13h5v5H1z" fill="#aaa" />
              <path d="M9 1h5v2l-2 1q5 8-1 11" fill="none" stroke="#c4c4c4" strokeWidth="2" />
            </svg>
          </IconPanel>
          <IconPanel>
            <Grip $top={3} />
            <svg width="17" height="18" viewBox="0 0 17 18">
              <path d="M5.500 1l4.500 2.500v5L5.500 11 1 8.500v-5z" fill="#8a8a8a" />
              <path d="M5.500 1l4.500 2.500v5L5.500 11 1 8.500v-5zM1 3.500L5.500 6 10 3.500M5.500 6v5" fill="none" stroke="#c4c4c4" />
              <path d="M12 1h4v3h-4zM12 5h4v3h-4zM12 9h4v2h-4zM1 14h15v4H1z" fill="#bbb" />
              <path d="M11 15h4l-2 2z" fill="#333" />
            </svg>
          </IconPanel>
        </IconColumn>
        <Panels>
          <ColorPanel dim={dim} />
          <AdjustPanel />
          {showLayers && <LayersPanel />}
        </Panels>
      </DockBody>
    </Dock>
  );
}

function LayerStyleDialog() {
  return (
    <Dialog $left={155} $top={81} $width={713} role="dialog" aria-label="Estilo de capa">
      <TitleBar $height={23} $drop={0} $side={3} $start={5}>
        <TitleText>Estilo de capa</TitleText>
        <CaptionButton $close aria-label="Cerrar"><CloseGlyph size={13} edge="#5a3038" /></CaptionButton>
      </TitleBar>
      <StyleBody>
        <StyleList>
          <StyleHeading $double>Estilos</StyleHeading>
          <StyleHeading>Opciones de fusión: Personalizado</StyleHeading>
          {layerStyles.map(style => (
            <StyleItem key={style.name} $indent={style.indent} $active={style.checked}>
              <LightCheck type="checkbox" defaultChecked={style.checked} />
              {style.name}
            </StyleItem>
          ))}
        </StyleList>
        <StyleButtons>
          <PushButton $primary $glow>OK</PushButton>
          <PushButton>Cancelar</PushButton>
          <PushButton>Estilo nuevo...</PushButton>
          <PreviewLabel>
            <LightCheck type="checkbox" $size={13} defaultChecked />
            Previsualizar
          </PreviewLabel>
          <PreviewFrame><PreviewColor /></PreviewFrame>
        </StyleButtons>
      </StyleBody>
    </Dialog>
  );
}

function GradientEditor() {
  const [name, setName] = useState('Naranja, amarillo, naranja');

  return (
    <Dialog $left={274} $top={73} $width={475} role="dialog" aria-label="Editor de degradado">
      <TitleBar $height={28} $drop={5} $side={8} $start={10}>
        <TitleText>Editor de degradado</TitleText>
        <CaptionButton aria-label="Minimizar">
          <svg width="11" height="5" viewBox="0 0 11 5"><path d="M.5.5h10v4H.5z" fill="#eee" stroke="#666" /></svg>
        </CaptionButton>
        <CaptionButton aria-label="Maximizar">
          <svg width="11" height="9" viewBox="0 0 11 9"><path d="M.5.5h10v8H.5z" fill="#eee" stroke="#556" /><path d="M3.500 3.500h4v2h-4z" fill="#9bb" stroke="#556" /></svg>
        </CaptionButton>
        <CaptionButton $close aria-label="Cerrar"><CloseGlyph size={13} edge="#5a3038" /></CaptionButton>
      </TitleBar>
      <EditorBody>
        <EditorTop>
          <PresetColumn>
            <GroupBox $padding="7px 9px 9px">
              <Legend $offset={6}>Ajustes preestablecidos</Legend>
              <GearButton aria-label="Opciones de ajustes">
                <svg width="11" height="11" viewBox="0 0 11 11">
                  <circle cx="5.500" cy="5.500" r="3" fill="none" stroke="#333" strokeWidth="1.500" />
                  <path d="M5.500 0v2M5.500 9v2M0 5.500h2M9 5.500h2M1.500 1.500L3 3M8 8l1.500 1.500M1.500 9.500L3 8M8 3l1.500-1.500" stroke="#333" strokeWidth="1.500" />
                </svg>
                <svg width="3" height="2" viewBox="0 0 3 2"><path d="M0 0h3L1.500 2z" fill="#222" /></svg>
              </GearButton>
              <PresetBox>
                <PresetGrid>
                  {presets.map(preset => (
                    <Preset key={preset.name} aria-label={preset.name} $stops={preset.stops} onClick={() => setName(preset.name)} />
                  ))}
                </PresetGrid>
                <PresetScroll>
                  <svg width="8" height="5" viewBox="0 0 8 5"><path d="M0 5l4-5 4 5z" fill="#777" /></svg>
                  <svg width="8" height="5" viewBox="0 0 8 5"><path d="M0 0h8L4 5z" fill="#777" /></svg>
                </PresetScroll>
              </PresetBox>
            </GroupBox>
          </PresetColumn>
          <ButtonColumn>
            <PushButton $primary>OK</PushButton>
            <PushButton>Cancelar</PushButton>
            <ButtonGap $size={7} />
            <PushButton>Cargar...</PushButton>
            <PushButton>Guardar...</PushButton>
          </ButtonColumn>
        </EditorTop>
        <NameRow>
          <NameLabel htmlFor="nombre">Nombre:</NameLabel>
          <NameInput id="nombre" value={name} onChange={e => setName(e.target.value)} />
          <ButtonSlot><PushButton>Nuevo</PushButton></ButtonSlot>
        </NameRow>
        <GroupBox $margin="0 1px" $padding="8px 7px 0 8px">
          <Legend $offset={5} $padding="8px 7px 0 19px">
            <label htmlFor="tipo">Tipo de degradado:</label>
            <SelectWrap $width={68}>
              <LightSelect id="tipo"><option>Sólido</option></LightSelect>
              <svg width="8" height="10" viewBox="0 0 8 10"><path d="M0 3h8L4 8z" fill="#000" /></svg>
            </SelectWrap>
          </Legend>
          <FieldRow>
            <label htmlFor="suavizado">Suavizado:</label>
            <Stepper>
              <StepInput id="suavizado" defaultValue="100" />
              <StepButton aria-label="Ajustar suavizado"><StepArrow color="#4a66a8" /></StepButton>
            </Stepper>
            %
          </FieldRow>
          <Track>
            <StopRow>
              <Stop aria-label="Opacidad inicial"><StopMarker color="#000" /></Stop>
              <Stop aria-label="Opacidad final"><StopMarker color="#000" /></Stop>
            </StopRow>
            <GradientBar />
            <StopRow>
              <Stop aria-label="Color inicial"><StopMarker flip color="#ff6d00" /></Stop>
              <Stop aria-label="Color medio"><StopMarker flip color="#ff0" /></Stop>
              <Stop aria-label="Color final"><StopMarker flip color="#ff6d00" /></Stop>
            </StopRow>
          </Track>
          <GroupBox $padding="6px 10px 10px 0">
            <Legend $offset={15} $padding="0 4px 0 6px">Detenciones</Legend>
            <StopFields>
              <StopLabel htmlFor="opacidadStop">Opacidad:</StopLabel>
              <Stepper>
                <StepInput id="opacidadStop" disabled />
                <StepButton disabled aria-label="Ajustar opacidad"><StepArrow color="#999" /></StepButton>
              </Stepper>
              <span>%</span>
              <StopLabel htmlFor="ubicacion1">Ubicación:</StopLabel>
              <LocationInput id="ubicacion1" disabled />
              <span>%</span>
              <PushButton disabled>Eliminar</PushButton>
              <StopLabel htmlFor="colorStop">Color:</StopLabel>
              <ColorWell>
                <WellButton id="colorStop" $width={54} disabled />
                <WellButton $width={16} disabled aria-label="Tipo de color"><svg width="6" height="10" viewBox="0 0 6 10"><path d="M0 0l6 5-6 5z" fill="#aaa" /></svg></WellButton>
              </ColorWell>
              <StopLabel htmlFor="ubicacion2">Ubicación:</StopLabel>
              <LocationInput id="ubicacion2" disabled />
              <span>%</span>
              <PushButton disabled>Eliminar</PushButton>
            </StopFields>
          </GroupBox>
        </GroupBox>
      </EditorBody>
    </Dialog>
  );
}

function App() {
  return (
    <Screen>
      <GlobalStyle />
      <AppWindow>
        <AppMenu open="Edición" />
        <ShapeOptions />
        <WorkArea>
          <Tools />
          <DocumentView title="paisaje.psd al 100% (Rectángulo redondeado 1, RGB/8) *" width={454} />
          <RightDock />
        </WorkArea>
      </AppWindow>
      <AppWindow $grow>
        <AppMenu />
        <EyedropperOptions />
        <WorkArea>
          <Tools active="eyedropper" />
          <DocumentView title="paisaje.psd al 100% (Rectángulo 2, RGB/8) *" width={454} inset />
          <RightDock dim showLayers />
        </WorkArea>
        <LayerStyleDialog />
        <GradientEditor />
        <Tooltip role="tooltip">Naranja, amarillo, naranja</Tooltip>
      </AppWindow>
    </Screen>
  );
}

export default App;
